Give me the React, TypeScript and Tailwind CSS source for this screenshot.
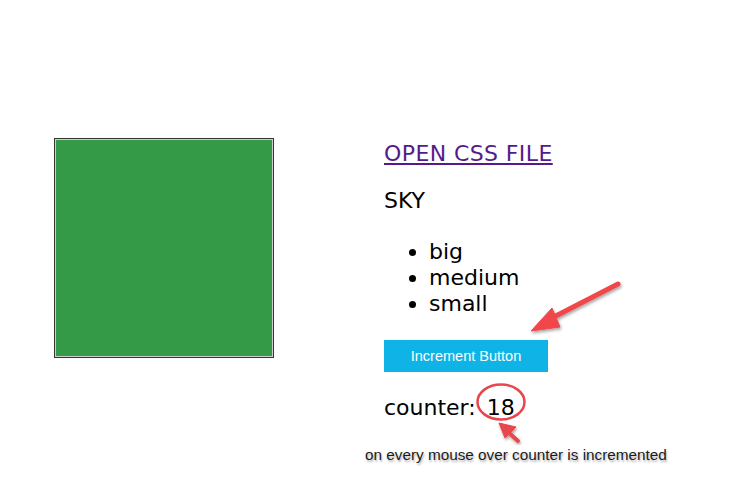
import React, { useState } from 'react';

const verdana = { fontFamily: 'Verdana, "DejaVu Sans", sans-serif' };

const Annotations = () => (
  <svg className="absolute left-0 top-0 pointer-events-none" width="742" height="486" viewBox="0 0 742 486">
    <defs>
      <filter id="shadow" x="-20%" y="-20%" width="140%" height="140%">
        <feDropShadow dx="1" dy="2" stdDeviation="1.5" floodColor="#000" floodOpacity="0.35" />
      </filter>
    </defs>
    {/* arrow to the button */}
    <g filter="url(#shadow)" fill="#f0474b" stroke="#f0474b">
      <line x1="618" y1="284" x2="548" y2="320" strokeWidth="5" strokeLinecap="round" />
      <polygon points="531,331 552,308 560,327" strokeWidth="1" strokeLinejoin="round" />
    </g>
    {/* circle on the number */}
    <ellipse cx="501" cy="402" rx="23.5" ry="17.5" fill="none" stroke="#e8464b" strokeWidth="2.5" />
    {/* arrow from the caption */}
    <g filter="url(#shadow)" fill="#e8464b" stroke="#e8464b">
      <line x1="518" y1="441" x2="508" y2="432" strokeWidth="4" strokeLinecap="round" />
      <polygon points="499,423 516,427 505,438" strokeWidth="1" strokeLinejoin="round" />
    </g>
  </svg>
);

export default function App() {
  const [counter, setCounter] = useState(18);

  return (
    <div className="relative w-[742px] h-[486px] bg-white overflow-hidden" style={verdana}>
      <div className="flex items-start">
        <div className="ml-[54px] mt-[138px] w-[220px] h-[220px] border border-[#333] shrink-0">
          <div className="w-full h-full border border-[#cfcfcf] bg-[#349a48]" />
        </div>

        <div className="ml-[110px] mt-[141px] flex flex-col items-start text-[22px] leading-[26px] text-black">
          <a href="#" className="text-[#551a8b] underline tracking-[0.4px]">OPEN CSS FILE</a>
          <p className="mt-[21px]">SKY</p>
          <ul className="mt-[25px] list-disc pl-[45px]">
            <li>big</li>
            <li>medium</li>
            <li>small</li>
          </ul>
          <button
            onClick={() => setCounter(counter + 1)}
            className="mt-[23px] w-[164px] h-[32px] bg-[#10b3e6] text-white text-[14.5px] leading-none"
            style={{ fontFamily: '"Liberation Sans", Arial, sans-serif' }}
          >
            Increment Button
          </button>
          <p className="mt-[23px]" onMouseOver={() => setCounter(counter + 1)}>
            counter: <span className="ml-[4px]">{counter}</span>
          </p>
        </div>
      </div>

      <Annotations />

      <p
        className="absolute left-[365px] top-[445px] text-[15.3px] leading-[20px] text-[#1c1c1c] whitespace-nowrap"
        style={{ fontFamily: '"Liberation Sans", Arial, sans-serif', textShadow: '1px 2px 2px rgba(0,0,0,0.3)' }}
      >
        on every mouse over counter is incremented
      </p>
    </div>
  );
}
